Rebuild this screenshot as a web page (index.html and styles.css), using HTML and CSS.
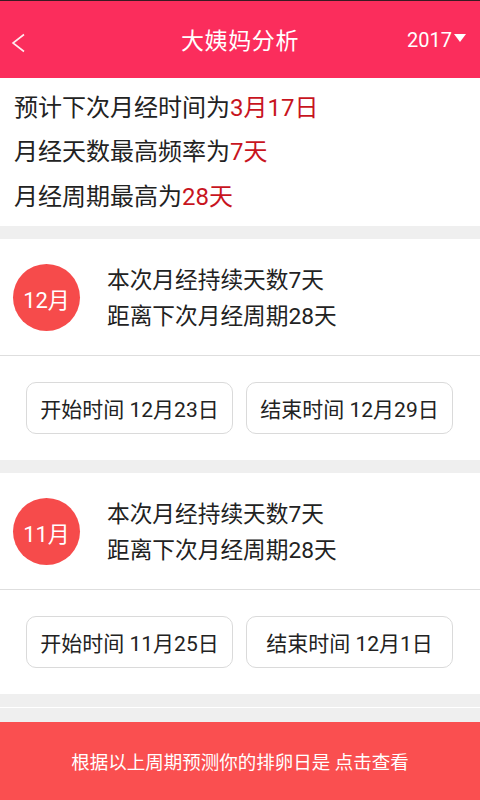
FILE: index.html
```html
<!DOCTYPE html>
<html lang="zh">
<head>
<meta charset="utf-8">
<link rel="stylesheet" href="styles.css">
</head>
<body>
<div class="app">
  <header class="topbar">
    <svg class="back" width="40" height="40" viewBox="0 0 40 40"><polyline points="21,15.5 10,24 21,32.5" fill="none" stroke="rgba(255,255,255,0.9)" stroke-width="1.6"/></svg>
    <h1 class="title">大姨妈分析</h1>
    <div class="year">2017<span class="tri"></span></div>
  </header>

  <section class="summary">
    <p>预计下次月经时间为<em>3月17日</em></p>
    <p>月经天数最高频率为<em>7天</em></p>
    <p>月经周期最高为<em>28天</em></p>
  </section>

  <section class="card">
    <div class="card-top">
      <div class="badge">12月</div>
      <div class="info">
        <p>本次月经持续天数7天</p>
        <p>距离下次月经周期28天</p>
      </div>
    </div>
    <div class="card-btns">
      <div class="btn">开始时间 12月23日</div>
      <div class="btn">结束时间 12月29日</div>
    </div>
  </section>

  <section class="card">
    <div class="card-top">
      <div class="badge">11月</div>
      <div class="info">
        <p>本次月经持续天数7天</p>
        <p>距离下次月经周期28天</p>
      </div>
    </div>
    <div class="card-btns">
      <div class="btn">开始时间 11月25日</div>
      <div class="btn">结束时间 12月1日</div>
    </div>
  </section>

  <div class="tail"></div>

  <footer class="footer">根据以上周期预测你的排卵日是 点击查看</footer>
</div>
</body>
</html>
```

FILE: styles.css
```css
* { box-sizing: border-box; margin: 0; padding: 0; }
html, body { width: 480px; height: 800px; overflow: hidden; }
body {
  background: #efefef;
  font-family: Roboto, "Noto Sans CJK SC", "Noto Sans", sans-serif;
  color: #222;
}
.app { display: flex; flex-direction: column; height: 800px; }

.topbar {
  height: 78px;
  border-top: 1px solid #3a1a22;
  background: #fb2d5c;
  display: grid;
  grid-template-columns: 1fr auto 1fr;
  align-items: center;
  padding: 0 14px;
  color: #fff;
}
.back { display: block; margin-left: -11px; }
.title {
  font-weight: normal;
  font-size: 23px;
  letter-spacing: 0.6px;
}
.year {
  justify-self: end;
  display: flex;
  align-items: center;
  font-size: 20px;
  margin-top: 1px;
}
.tri {
  width: 0; height: 0;
  border-left: 6.5px solid transparent;
  border-right: 6.5px solid transparent;
  border-top: 8px solid #fff;
  margin-left: 2px;
  margin-top: -3px;
}

.summary {
  background: #fff;
  padding: 8px 14px 7px;
}
.summary p {
  font-size: 24px;
  line-height: 44.5px;
  color: #222;
}
.summary em { font-style: normal; color: #c8141e; }

.card { background: #fff; margin-top: 13px; }
.card-top {
  height: 117px;
  display: flex;
  align-items: center;
  padding-left: 13px;
  border-bottom: 1px solid #dedede;
}
.badge {
  width: 67px; height: 67px;
  border-radius: 50%;
  background: #f64b4b;
  color: #fff;
  font-size: 22px;
  display: flex;
  align-items: center;
  justify-content: center;
  margin-top: 1px;
}
.info { margin-left: 27px; margin-top: 4px; }
.info p { font-size: 22.7px; line-height: 36px; color: #222; }

.card-btns {
  display: flex;
  gap: 13px;
  padding: 26px 27px 26px 26px;
}
.btn {
  flex: 1;
  height: 52px;
  border: 1.5px solid #dadada;
  border-radius: 10px;
  display: flex;
  align-items: center;
  justify-content: center;
  font-size: 21px;
  color: #222;
}

.tail {
  height: 28px;
  background: linear-gradient(#efefef 0 13px, #fff 13px 14px, #efefef 14px);
}
.footer {
  height: 78px;
  background: #fa4f50;
  color: #fff;
  font-size: 18.5px;
  display: flex;
  align-items: center;
  justify-content: center;
  margin-top: auto;
}
```
